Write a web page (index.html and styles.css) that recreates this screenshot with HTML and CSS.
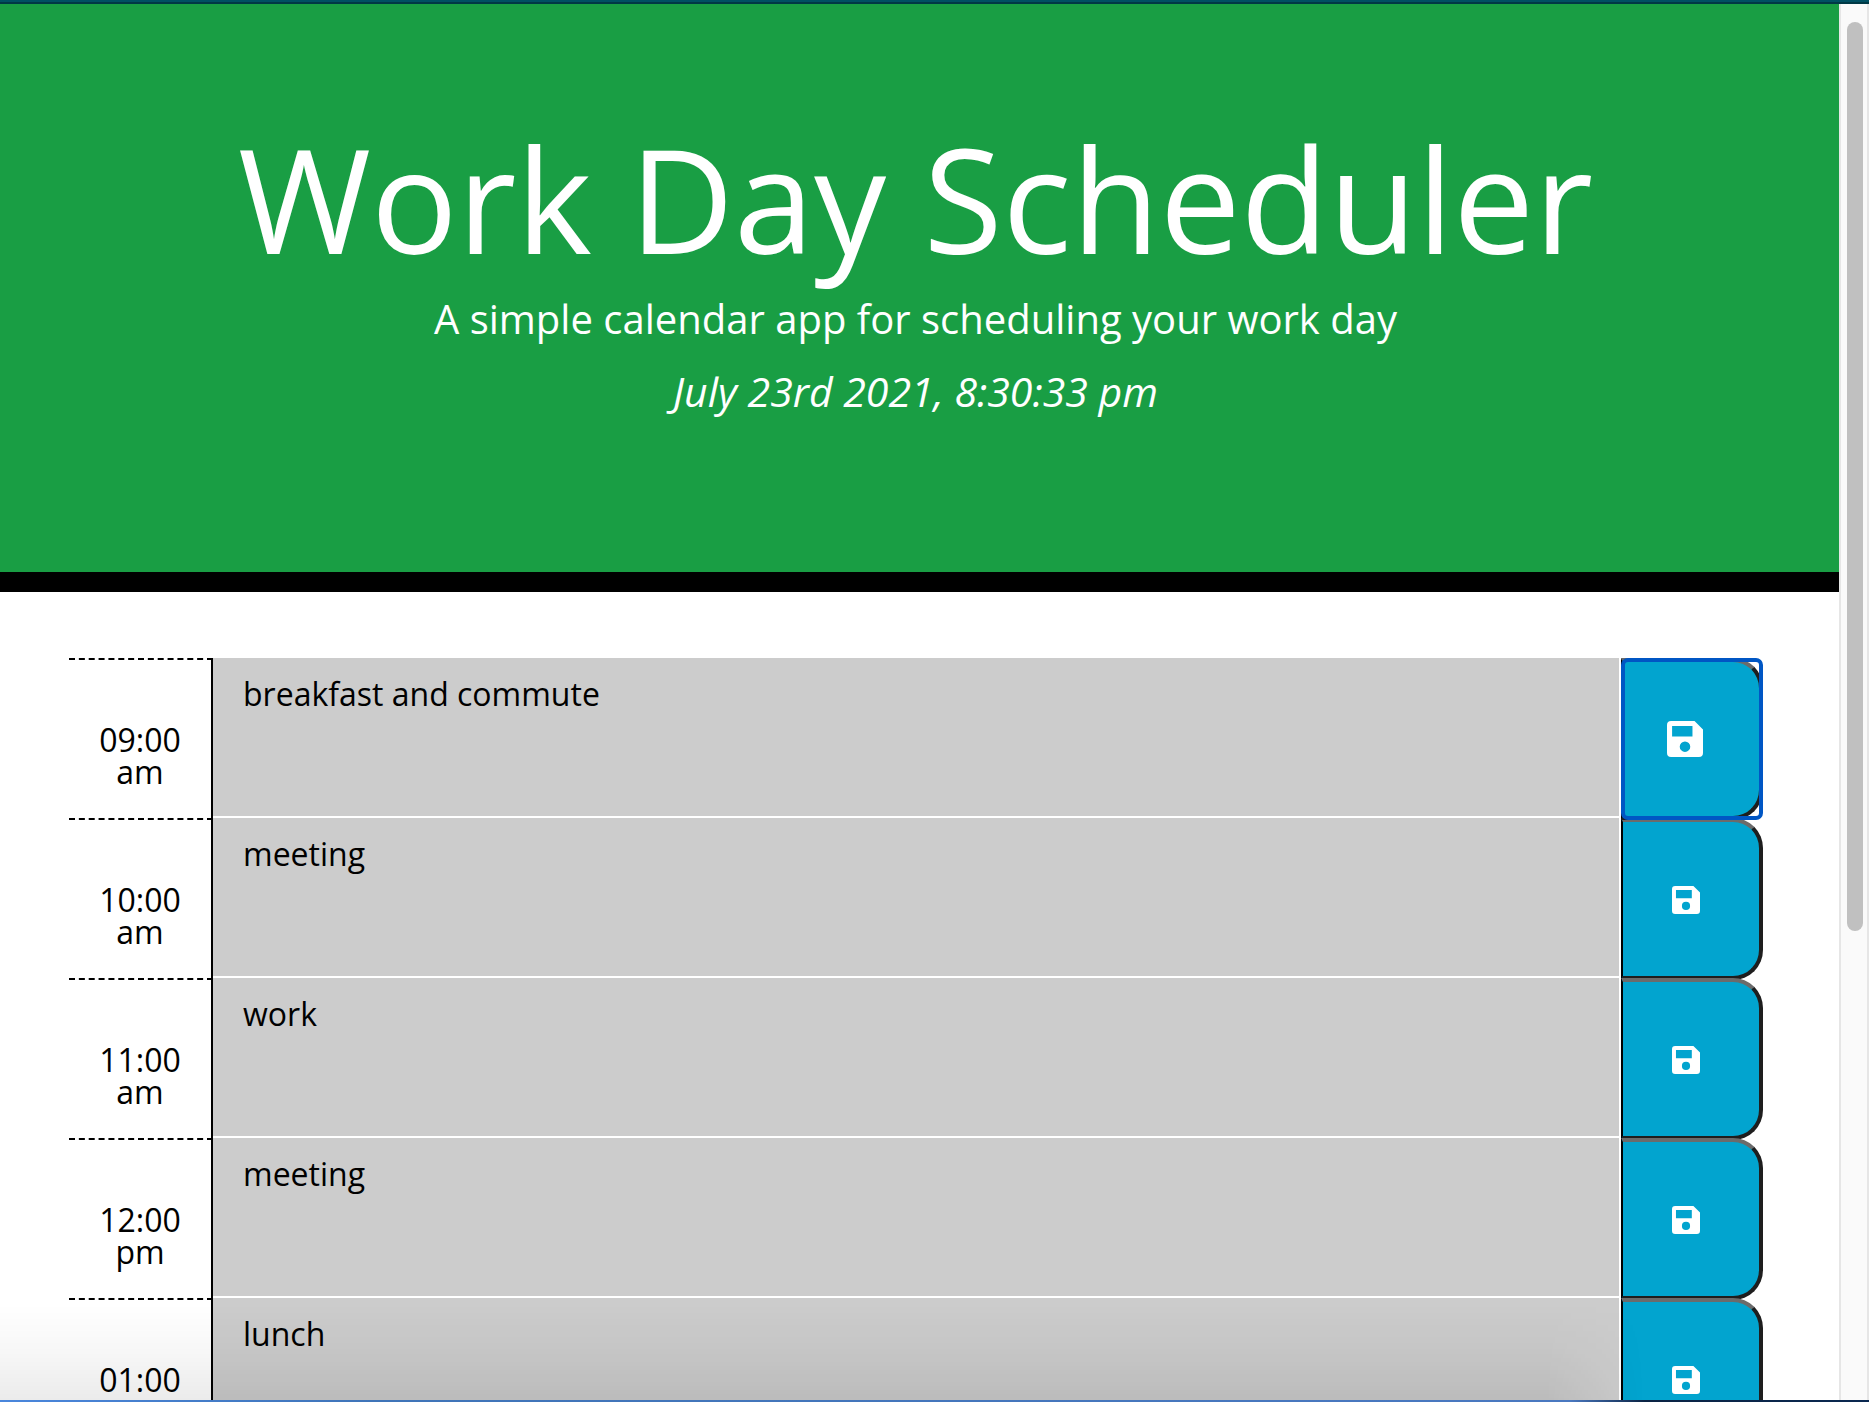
FILE: index.html
```html
<!DOCTYPE html>
<html lang="en">
<head>
  <meta charset="utf-8">
  <meta name="viewport" content="width=device-width, initial-scale=1">
  <title>Work Day Scheduler</title>
  <link rel="stylesheet" href="styles.css">
</head>
<body>
  <svg class="sprite" aria-hidden="true">
    <symbol id="save" viewBox="0 0 106 106">
      <path fill="currentColor" fill-rule="evenodd" d="M12 0H81L106 25V94a12 12 0 0 1-12 12H12A12 12 0 0 1 0 94V12A12 12 0 0 1 12 0ZM15 15V46H75V15ZM53 60a15.500 15.500 0 1 0 0 31a15.500 15.500 0 1 0 0-31Z"/>
    </symbol>
  </svg>
  <div class="window">
    <div class="edge-top"></div>
    <div class="view">
      <div class="page">
        <header class="hero">
          <h1 class="title">Work Day Scheduler</h1>
          <p class="lead">A simple calendar app for scheduling your work day</p>
          <p class="lead now">July 23rd 2021, 8:30:33 pm</p>
        </header>
        <main class="schedule">
          <div class="row">
            <label class="hour" for="h9">09:00 am</label>
            <textarea class="task" id="h9">breakfast and commute</textarea>
            <button class="save focused" type="button" aria-label="Save 09:00 am"><svg class="icon"><use href="#save"/></svg></button>
          </div>
          <div class="row">
            <label class="hour" for="h10">10:00 am</label>
            <textarea class="task" id="h10">meeting</textarea>
            <button class="save" type="button" aria-label="Save 10:00 am"><svg class="icon"><use href="#save"/></svg></button>
          </div>
          <div class="row">
            <label class="hour" for="h11">11:00 am</label>
            <textarea class="task" id="h11">work</textarea>
            <button class="save" type="button" aria-label="Save 11:00 am"><svg class="icon"><use href="#save"/></svg></button>
          </div>
          <div class="row">
            <label class="hour" for="h12">12:00 pm</label>
            <textarea class="task" id="h12">meeting</textarea>
            <button class="save" type="button" aria-label="Save 12:00 pm"><svg class="icon"><use href="#save"/></svg></button>
          </div>
          <div class="row">
            <label class="hour" for="h13">01:00 pm</label>
            <textarea class="task" id="h13">lunch</textarea>
            <button class="save" type="button" aria-label="Save 01:00 pm"><svg class="icon"><use href="#save"/></svg></button>
          </div>
        </main>
      </div>
      <div class="scrollbar"><div class="thumb"></div></div>
      <div class="shade"></div>
    </div>
    <div class="edge-bottom"></div>
  </div>
</body>
</html>
```
FILE: styles.css
```css
* {
  box-sizing: border-box;
}

body {
  margin: 0;
  font-family: "Open Sans", "Noto Sans", sans-serif;
  font-size: 32px;
  color: #000;
  background: #fff;
}

.sprite {
  display: none;
}

.window {
  display: grid;
  grid-template-rows: 4px minmax(0, 1fr) 2px;
  height: 100vh;
  overflow: hidden;
}

.edge-top {
  background: linear-gradient(#005062 50%, #003945 50%);
}

.edge-bottom {
  background: linear-gradient(90deg, #4a86dc, #3f74b8 20%, #4a78c0 84%, #0a2344 88%, #0a2850);
}

.view {
  position: relative;
  display: grid;
  grid-template-columns: minmax(0, 1fr) 30px;
  overflow: hidden;
}

.page {
  min-height: 0;
  overflow: hidden;
}

/* Header */
.hero {
  padding: 108px 8px 140px 0;
  border-bottom: 20px solid #000;
  background: #199e44;
  color: #fff;
  text-align: center;
}

.title {
  margin: 0;
  font-size: 144px;
  font-weight: 400;
  line-height: 172px;
}

.lead {
  margin: 5px 0 12px;
  font-size: 40px;
  line-height: 60px;
}

.now {
  margin-bottom: 11px;
  font-size: 41px;
  font-style: italic;
}

/* Hour rows */
.schedule {
  padding: 66px 76px 0 69px;
}

.row {
  display: grid;
  grid-template-columns: 144px minmax(0, 1fr) 142px;
  height: 160px;
}

.hour {
  padding: 64px 28px 0;
  border-top: 2px dashed #000;
  border-right: 2px solid #000;
  line-height: 32px;
  text-align: center;
}

.task {
  display: block;
  width: 100%;
  height: 160px;
  margin: 0;
  padding: 12px 30px;
  border: solid #fff;
  border-width: 0 2px 2px 0;
  border-radius: 0;
  outline: 0;
  resize: none;
  overflow: hidden;
  background: #ccc;
  color: #000;
  font: inherit;
  line-height: 48px;
}

.save {
  position: relative;
  display: flex;
  align-items: center;
  justify-content: center;
  height: 162px;
  padding: 2px 10px 0 0;
  border-style: solid;
  border-width: 4px 4px 4px 2px;
  border-color: #6b6b6b #1e1e1e #1e1e1e #000;
  border-radius: 0 30px 30px 0;
  background: #02a4cf;
  color: #fff;
}

.icon {
  width: 28px;
  height: 28px;
}

.focused {
  z-index: 1;
  padding: 0 12px 0 0;
}

.focused .icon {
  width: 36px;
  height: 36px;
}

.focused::after {
  content: "";
  position: absolute;
  inset: -4px -4px -4px -2px;
  border: 4px solid #0056c4;
  border-radius: 7px;
}

/* Window chrome */
.scrollbar {
  padding: 18px 4px 0 6px;
  border: solid #e6e6e6;
  border-width: 0 2px;
  background: #fafafa;
}

.thumb {
  width: 16px;
  height: 66%;
  border-radius: 8px;
  background: #c0c0c0;
}

.shade {
  position: absolute;
  inset: auto 12% 0 0;
  z-index: 2;
  height: 96px;
  background: linear-gradient(transparent, rgba(0, 0, 0, 0.03) 50%, rgba(0, 0, 0, 0.08));
  mask-image: linear-gradient(90deg, #000 94%, transparent);
  pointer-events: none;
}
```
